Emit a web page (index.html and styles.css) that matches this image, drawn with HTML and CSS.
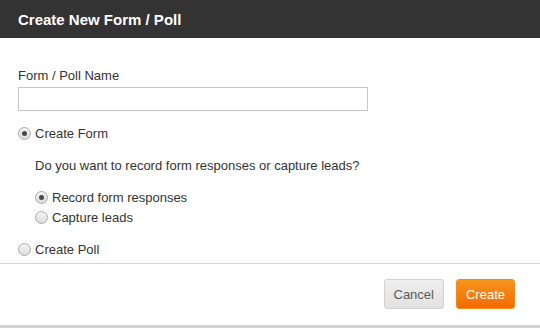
FILE: index.html
```html
<!DOCTYPE html>
<html lang="en">
<head>
    <meta charset="UTF-8">
    <title>Create New Form / Poll</title>
    <link rel="stylesheet" href="styles.css">
</head>
<body>
    <div class="modal">
        <header class="modal-header">
            <h1>Create New Form / Poll</h1>
        </header>
        <div class="modal-body">
            <label class="field-label" for="formName">Form / Poll Name</label>
            <input type="text" id="formName" class="text-input">

            <div class="option top">
                <span class="radio checked"></span>
                <span>Create Form</span>
            </div>

            <div class="sub-options">
                <p class="question">Do you want to record form responses or capture leads?</p>
                <div class="option tight">
                    <span class="radio checked"></span>
                    <span>Record form responses</span>
                </div>
                <div class="option tight">
                    <span class="radio"></span>
                    <span>Capture leads</span>
                </div>
            </div>

            <div class="option poll">
                <span class="radio"></span>
                <span>Create Poll</span>
            </div>
        </div>
        <footer class="modal-footer">
            <button class="btn btn-cancel">Cancel</button>
            <button class="btn btn-create">Create</button>
        </footer>
    </div>
</body>
</html>
```

FILE: styles.css
```css
body {
    margin: 0;
    background: #d2d2d2;
    font-family: "Liberation Sans", Arial, sans-serif;
    color: #333;
}
.modal {
    background: #fff;
    height: 325px;
    display: flex;
    flex-direction: column;
}
.modal-header {
    background: #333;
    height: 38px;
    display: flex;
    align-items: center;
    padding: 0 18px;
}
.modal-header h1 {
    margin: 0;
    font-size: 15px;
    font-weight: bold;
    color: #fff;
}
.modal-body {
    padding: 30px 18px 5px;
    border-bottom: 1px solid #d4d4d4;
    font-size: 13px;
}
.field-label {
    display: block;
    line-height: 15px;
    margin-bottom: 4px;
}
.text-input {
    display: block;
    box-sizing: border-box;
    width: 350px;
    height: 24px;
    margin: 0;
    border: 1px solid #c6c6c6;
    border-radius: 0;
    padding: 2px 6px;
    font-family: inherit;
    font-size: 13px;
    outline: none;
}
.option {
    display: flex;
    align-items: center;
    gap: 4px;
    height: 18px;
}
.option.top {
    margin-top: 13px;
}
.option.tight {
    height: 20px;
}
.sub-options {
    padding-left: 17px;
}
.question {
    margin: 15px 0 12px;
    line-height: 18px;
}
.option.poll {
    margin-top: 13px;
}
.radio {
    box-sizing: border-box;
    width: 13px;
    height: 13px;
    border-radius: 50%;
    border: 1px solid #a9a9a9;
    background: linear-gradient(#f4f4f4, #dcdcdc);
    position: relative;
    flex-shrink: 0;
}
.radio.checked::after {
    content: "";
    position: absolute;
    left: 3px;
    top: 3px;
    width: 5px;
    height: 5px;
    border-radius: 50%;
    background: #4a4a4a;
}
.modal-footer {
    display: flex;
    justify-content: flex-end;
    gap: 12px;
    padding: 15px 25px 0 0;
}
.btn {
    height: 30px;
    padding: 0 9px;
    font-family: inherit;
    font-size: 13px;
    border-radius: 3px;
    cursor: pointer;
}
.btn-cancel {
    background: linear-gradient(#eeeeee, #e2e2e2);
    border: 1px solid #d0d0d0;
    color: #5a5a5a;
}
.btn-create {
    background: linear-gradient(#f7941d, #f26b00);
    border: 1px solid #f08a20;
    color: #fff;
}
```
